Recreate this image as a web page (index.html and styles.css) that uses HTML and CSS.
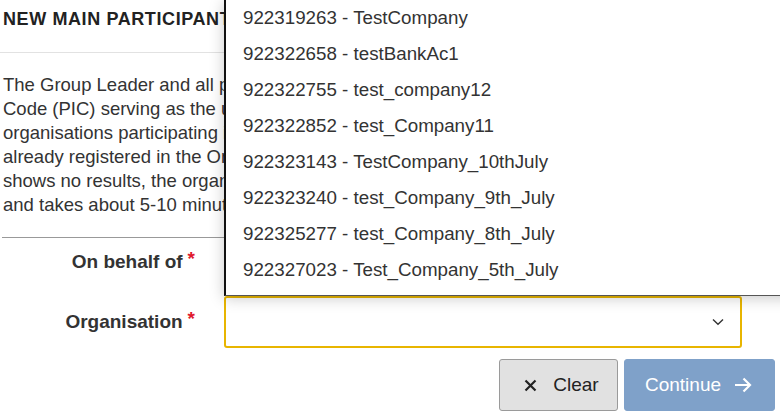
FILE: index.html
```html
<!DOCTYPE html>
<html lang="en">
<head>
<meta charset="utf-8">
<title>New main participant</title>
<link rel="stylesheet" href="styles.css">
</head>
<body>
<div class="page">
  <h2 class="title">New main participant</h2>
  <div class="content">
    <p class="intro">The Group Leader and all partner organisations need a Participant Identification<br>Code (PIC) serving as the unique identifier of the organisation. Search for the<br>organisations participating in your activity by name or PIC. They should be<br>already registered in the Organisation Registration System. If the search below<br>shows no results, the organisation must register first. Registration is free<br>and takes about 5-10 minutes.</p>
    <hr class="divider">
    <div class="form">
      <label class="label">On behalf of <span class="req">*</span></label>
      <div class="field"></div>
      <label class="label">Organisation <span class="req">*</span></label>
      <div class="field">
        <div class="select">
          <svg class="chev" width="12" height="8" viewBox="0 0 12 8"><path d="M1 1.5 L6 6.2 L11 1.5" fill="none" stroke="#333" stroke-width="1.4"/></svg>
        </div>
      </div>
    </div>
    <div class="actions">
      <button class="btn btn-clear"><svg width="13" height="13" viewBox="0 0 13 13"><path d="M1.5 1.5 L11.5 11.5 M11.5 1.5 L1.5 11.5" stroke="#222" stroke-width="2.2"/></svg><span>Clear</span></button>
      <button class="btn btn-continue"><span>Continue</span><svg width="18" height="16" viewBox="0 0 18 16"><path d="M1 8 H16 M9.5 1.5 L16 8 L9.5 14.5" fill="none" stroke="#fff" stroke-width="2.2"/></svg></button>
    </div>
  </div>
  <ul class="dropdown">
    <li>922319263 - TestCompany</li>
    <li>922322658 - testBankAc1</li>
    <li>922322755 - test_company12</li>
    <li>922322852 - test_Company11</li>
    <li>922323143 - TestCompany_10thJuly</li>
    <li>922323240 - test_Company_9th_July</li>
    <li>922325277 - test_Company_8th_July</li>
    <li>922327023 - Test_Company_5th_July</li>
  </ul>
</div>
</body>
</html>
```

FILE: styles.css
```css
html, body {
  margin: 0;
  padding: 0;
  background: #fff;
  overflow: hidden;
}
body {
  font-family: "Liberation Sans", Arial, sans-serif;
  color: #333;
}
.page {
  position: relative;
  width: 780px;
  height: 412px;
  overflow: hidden;
}
.title {
  margin: 0;
  height: 53px;
  box-sizing: border-box;
  padding: 9px 3px 0;
  font-size: 18px;
  letter-spacing: 0.6px;
  font-weight: bold;
  text-transform: uppercase;
  color: #222;
  border-bottom: 1px solid #e2e2e2;
  white-space: nowrap;
}
.content {
  padding: 0 5px 0 2px;
}
.intro {
  margin: 20px 0 0 1px;
  font-size: 18.5px;
  line-height: 24px;
  color: #333;
  white-space: nowrap;
}
.divider {
  margin: 20px 0 0;
  border: 0;
  border-top: 1px solid #999;
  height: 0;
}
.form {
  display: grid;
  grid-template-columns: 222px 518px;
  grid-template-rows: 48px 52px;
  row-gap: 10px;
}
.label {
  display: flex;
  align-items: center;
  justify-content: flex-end;
  padding-right: 29px;
  font-size: 19px;
  font-weight: bold;
  color: #333;
}
.label .req {
  color: #e0182d;
  margin-left: 5px;
  font-size: 19px;
  position: relative;
  top: -3px;
}
.select {
  height: 52px;
  box-sizing: border-box;
  border: 2px solid #e8b500;
  border-radius: 3px;
  display: flex;
  align-items: center;
  justify-content: flex-end;
  padding-right: 16px;
}
.actions {
  display: flex;
  justify-content: flex-end;
  gap: 6px;
  margin-top: 11px;
}
.btn {
  height: 52px;
  border-radius: 3px;
  font-family: "Liberation Sans", Arial, sans-serif;
  font-size: 19px;
  display: flex;
  align-items: center;
  justify-content: center;
  gap: 16px;
  cursor: pointer;
  padding: 0;
}
.btn-clear {
  width: 119px;
  background: #e1e1e1;
  border: 1px solid #9a9a9a;
  color: #222;
  padding-left: 6px;
}
.btn-continue {
  width: 151px;
  background: #7fa1c9;
  border: 1px solid #7fa1c9;
  color: #fff;
  gap: 13px;
  padding-right: 2px;
}
.dropdown {
  position: absolute;
  top: 0;
  left: 224px;
  width: 570px;
  height: 295px;
  margin: 0;
  padding: 0;
  list-style: none;
  background: #fff;
  border-left: 2px solid #111;
  border-bottom: 1px solid #555;
  box-shadow: 0 2px 14px rgba(0, 0, 0, 0.22);
}
.dropdown li {
  height: 36px;
  line-height: 36px;
  padding-left: 17px;
  font-size: 18.75px;
  color: #333;
  white-space: nowrap;
}
```
